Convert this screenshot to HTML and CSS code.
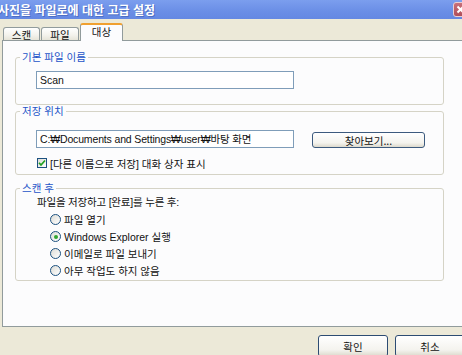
FILE: index.html
```html
<!DOCTYPE html>
<html lang="ko">
<head>
<meta charset="utf-8">
<link rel="stylesheet" href="styles.css">
</head>
<body>
<div class="window">
  <div class="titlebar">
    <span class="title">사진을 파일로에 대한 고급 설정</span>
    <span class="close"><svg width="13" height="13" viewBox="0 0 13 13"><path d="M3.5 3.5 L9.5 9.5 M9.5 3.5 L3.5 9.5" stroke="#fff" stroke-width="2" fill="none"/></svg></span>
  </div>
  <div class="tabs">
    <div class="tab t1">스캔</div>
    <div class="tab t2">파일</div>
    <div class="tab sel">대상</div>
  </div>
  <div class="panel">
    <fieldset class="group g1">
      <legend>기본 파일 이름</legend>
      <div class="input name">Scan</div>
    </fieldset>
    <fieldset class="group g2">
      <legend>저장 위치</legend>
      <div class="pathrow">
        <div class="input path">C:₩Documents and Settings₩user₩바탕 화면</div>
        <div class="btn browse">찾아보기...</div>
      </div>
      <div class="checkrow">
        <span class="check"><svg width="8" height="8" viewBox="0 0 8 8"><path d="M1 3.8 L3 6 L7 1.5" stroke="#21a121" stroke-width="1.7" fill="none"/></svg></span>
        <span>[다른 이름으로 저장] 대화 상자 표시</span>
      </div>
    </fieldset>
    <fieldset class="group g3">
      <legend>스캔 후</legend>
      <div class="prompt">파일을 저장하고 [완료]를 누른 후:</div>
      <div class="radios">
        <div class="radiorow"><span class="radio"></span><span>파일 열기</span></div>
        <div class="radiorow"><span class="radio on"></span><span>Windows Explorer 실행</span></div>
        <div class="radiorow"><span class="radio"></span><span>이메일로 파일 보내기</span></div>
        <div class="radiorow"><span class="radio"></span><span>아무 작업도 하지 않음</span></div>
      </div>
    </fieldset>
  </div>
  <div class="buttons">
    <div class="btn big">확인</div>
    <div class="btn big">취소</div>
  </div>
</div>
</body>
</html>
```
FILE: styles.css
```css
html, body {
  margin: 0;
  padding: 0;
}
body {
  width: 462px;
  height: 355px;
  overflow: hidden;
  background: #ece9d8;
  font-family: "Liberation Sans", "Noto Sans CJK KR", sans-serif;
  font-size: 10.5px;
  color: #111;
}
.window {
  width: 470px;
}
.titlebar {
  height: 19px;
  display: flex;
  align-items: center;
  background: linear-gradient(#7b9eee, #6a8ee6 60%, #6488e2);
  overflow: hidden;
}
.title {
  flex: 1;
  margin-left: -2px;
  color: #fff;
  font-family: "Noto Sans CJK KR", sans-serif;
  font-weight: bold;
  font-size: 12px;
  line-height: 19px;
  white-space: nowrap;
  text-shadow: 1px 1px 0 #4e6fc4;
}
.close {
  width: 15px;
  height: 15px;
  margin-right: 2px;
  box-sizing: border-box;
  border: 1px solid #e8d0d4;
  border-radius: 3px;
  background: linear-gradient(#c8707a, #b04f5a);
  display: flex;
  align-items: center;
  justify-content: center;
}
.tabs {
  height: 21px;
  display: flex;
  align-items: flex-end;
  padding-left: 3px;
}
.tab {
  box-sizing: border-box;
  border: 1px solid #919b9c;
  border-bottom: none;
  border-radius: 3px 3px 0 0;
  background: linear-gradient(#ffffff, #f3f2ec 60%, #e6e4d8);
  height: 13px;
  display: flex;
  align-items: center;
  justify-content: center;
  font-family: "Noto Sans CJK KR", sans-serif;
  font-size: 10.5px;
  line-height: 12px;
  padding-top: 1px;
}
.t1 { width: 37px; }
.t2 { width: 38px; margin-left: 1px; }
.tab.sel {
  width: 43px;
  height: 18px;
  margin-left: 1px;
  margin-bottom: -1px;
  position: relative;
  z-index: 1;
  background: #fcfcfe;
  border-top: 2px solid #f0a030;
  padding-top: 0;
  padding-bottom: 2px;
}
.panel {
  margin-left: 2px;
  box-sizing: border-box;
  height: 287px;
  border: 1px solid #919b9c;
  border-right: none;
  background: #fcfcfd;
  padding: 10px 0 0 12px;
}
.group {
  margin: 0;
  width: 429px;
  box-sizing: border-box;
  border: 1px solid #d5d3c6;
  border-radius: 3px;
  padding: 0;
  min-inline-size: 0;
}
.group legend {
  margin-left: 4px;
  padding: 0 2px;
  color: #2454c8;
  font-size: 10.5px;
  line-height: 12px;
}
.input {
  box-sizing: border-box;
  width: 258px;
  height: 18px;
  border: 1px solid #7f9db9;
  background: #fff;
  padding-left: 3px;
  line-height: 16px;
  white-space: nowrap;
}
.path { letter-spacing: -0.15px; }
.g1 { padding-bottom: 15px; }
.name { margin: 8px 0 0 20px; }
.g2 { margin-top: 0; padding-bottom: 5px; }
.pathrow {
  display: flex;
  align-items: center;
  margin: 13px 0 0 20px;
}
.browse {
  margin-left: 18px;
  width: 113px;
  height: 16px;
  margin-top: 2px;
}
.btn {
  box-sizing: border-box;
  border: 1px solid #3c5a7e;
  border-radius: 3px;
  background: linear-gradient(#ffffff, #f4f3ee 70%, #dcd9cc);
  display: flex;
  align-items: center;
  justify-content: center;
  font-family: "Noto Sans CJK KR", sans-serif;
  font-size: 10.5px;
}
.checkrow {
  display: flex;
  align-items: center;
  height: 12px;
  margin: 9px 0 0 21px;
  gap: 3px;
}
.check {
  box-sizing: border-box;
  width: 10px;
  height: 10px;
  border: 1px solid #1c5180;
  background: linear-gradient(135deg, #dcdcd6, #ffffff);
  display: flex;
  align-items: center;
  justify-content: center;
}
.g3 { margin-top: 7px; padding-bottom: 1px; }
.prompt {
  margin: 2px 0 0 21px;
  line-height: 12px;
  letter-spacing: -0.2px;
}
.radios {
  margin: 3px 0 0 34px;
}
.radiorow {
  display: flex;
  align-items: center;
  height: 17px;
  gap: 3px;
}
.radio {
  box-sizing: border-box;
  width: 11px;
  height: 11px;
  border: 1px solid #1c5180;
  border-radius: 50%;
  background: linear-gradient(135deg, #dcdcd6, #ffffff);
  display: flex;
  align-items: center;
  justify-content: center;
}
.radio.on::after {
  content: "";
  width: 4px;
  height: 4px;
  border-radius: 50%;
  background: #31a531;
}
.buttons {
  display: flex;
  justify-content: flex-end;
  gap: 7px;
  padding-right: 5px;
  margin-top: 8px;
}
.btn.big {
  width: 70px;
  height: 22px;
  border-color: #2d4c73;
}
```
